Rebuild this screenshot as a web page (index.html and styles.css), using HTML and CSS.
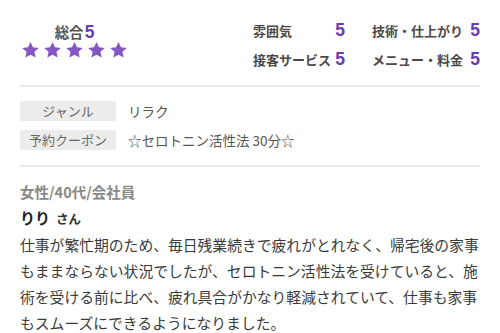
FILE: index.html
```html
<!DOCTYPE html>
<html lang="ja">
<head>
<meta charset="utf-8">
<link rel="stylesheet" href="styles.css">
</head>
<body>
<div class="review">
  <section class="scores">
    <div class="overall">
      <div class="overall-title">総合<span class="num">5</span></div>
      <div class="stars">
        <svg viewBox="2 2 20 19" class="star"><path d="M12 2l2.94 6.26 6.86.74-5.1 4.66 1.4 6.84L12 17.27 5.9 20.5l1.4-6.84L2.2 9l6.86-.74z"/></svg>
        <svg viewBox="2 2 20 19" class="star"><path d="M12 2l2.94 6.26 6.86.74-5.1 4.66 1.4 6.84L12 17.27 5.9 20.5l1.4-6.84L2.2 9l6.86-.74z"/></svg>
        <svg viewBox="2 2 20 19" class="star"><path d="M12 2l2.94 6.26 6.86.74-5.1 4.66 1.4 6.84L12 17.27 5.9 20.5l1.4-6.84L2.2 9l6.86-.74z"/></svg>
        <svg viewBox="2 2 20 19" class="star"><path d="M12 2l2.94 6.26 6.86.74-5.1 4.66 1.4 6.84L12 17.27 5.9 20.5l1.4-6.84L2.2 9l6.86-.74z"/></svg>
        <svg viewBox="2 2 20 19" class="star"><path d="M12 2l2.94 6.26 6.86.74-5.1 4.66 1.4 6.84L12 17.27 5.9 20.5l1.4-6.84L2.2 9l6.86-.74z"/></svg>
      </div>
    </div>
    <div class="ratings">
      <div class="rating"><span class="rating-label">雰囲気</span><span class="num">5</span></div>
      <div class="rating"><span class="rating-label">技術・仕上がり</span><span class="num">5</span></div>
      <div class="rating"><span class="rating-label">接客サービス</span><span class="num">5</span></div>
      <div class="rating"><span class="rating-label">メニュー・料金</span><span class="num">5</span></div>
    </div>
  </section>

  <section class="meta">
    <div class="meta-row"><span class="meta-label">ジャンル</span><span class="meta-value">リラク</span></div>
    <div class="meta-row"><span class="meta-label">予約クーポン</span><span class="meta-value">☆セロトニン活性法 30分☆</span></div>
  </section>

  <section class="comment">
    <div class="profile">女性/40代/会社員</div>
    <div class="name">りり<span class="honorific">さん</span></div>
    <p class="body-text">仕事が繁忙期のため、毎日残業続きで疲れがとれなく、帰宅後の家事もままならない状況でしたが、セロトニン活性法を受けていると、施術を受ける前に比べ、疲れ具合がかなり軽減されていて、仕事も家事もスムーズにできるようになりました。</p>
  </section>
</div>
</body>
</html>
```

FILE: styles.css
```css
* { box-sizing: border-box; }

html, body {
  margin: 0;
  padding: 0;
  background: #fff;
}

body {
  font-family: "Noto Sans CJK JP", "Noto Sans", sans-serif;
  color: #333;
  overflow: hidden;
}

.review {
  padding: 0 20px;
  width: 500px;
}

.num {
  font-family: "Liberation Sans", Arial, sans-serif;
  font-weight: 700;
  color: #6a3cae;
}

/* scores */
.scores {
  display: flex;
  justify-content: space-between;
  padding-top: 16px;
  padding-bottom: 11px;
  border-bottom: 2px solid #ebebeb;
}

.overall {
  margin-left: 2px;
  margin-top: 6px;
  width: 105px;
  display: flex;
  flex-direction: column;
  align-items: center;
}

.overall-title {
  font-size: 14.5px;
  font-weight: 700;
  line-height: 20px;
  color: #555;
}

.overall-title .num {
  font-size: 17.5px;
  margin-left: 1px;
}

.stars {
  display: flex;
  gap: 5px;
  margin-top: 0;
}

.star {
  width: 17px;
  height: 16px;
  fill: #8457c3;
  display: block;
}

.ratings {
  display: grid;
  grid-template-columns: 92px 108px;
  column-gap: 27px;
  grid-auto-rows: 29px;
}

.rating {
  display: flex;
  justify-content: space-between;
  align-items: center;
}

.rating-label {
  font-size: 13px;
  font-weight: 700;
  color: #4d4848;
  white-space: nowrap;
}

.rating .num {
  font-size: 17.5px;
}

/* meta */
.meta {
  padding-top: 14px;
  padding-bottom: 15px;
  border-bottom: 2px solid #ebebeb;
  display: flex;
  flex-direction: column;
  gap: 9px;
}

.meta-row {
  display: flex;
  align-items: center;
  gap: 12px;
}

.meta-label {
  width: 96px;
  height: 20px;
  line-height: 20px;
  background: #ececec;
  color: #666;
  font-size: 13px;
  text-align: center;
}

.meta-value {
  font-size: 13.5px;
  color: #555;
}

/* comment */
.comment {
  padding-top: 15px;
}

.profile {
  font-size: 14.5px;
  font-weight: 700;
  color: #888;
  line-height: 20px;
}

.name {
  margin-top: 6px;
  font-size: 15px;
  font-weight: 700;
  color: #222;
  line-height: 20px;
}

.honorific {
  font-size: 12.5px;
  font-weight: 700;
  margin-left: 6px;
  color: #333;
}

.body-text {
  margin: 3px 0 0;
  width: 462px;
  font-size: 14.8px;
  line-height: 26px;
  color: #3a3a3a;
}
```
